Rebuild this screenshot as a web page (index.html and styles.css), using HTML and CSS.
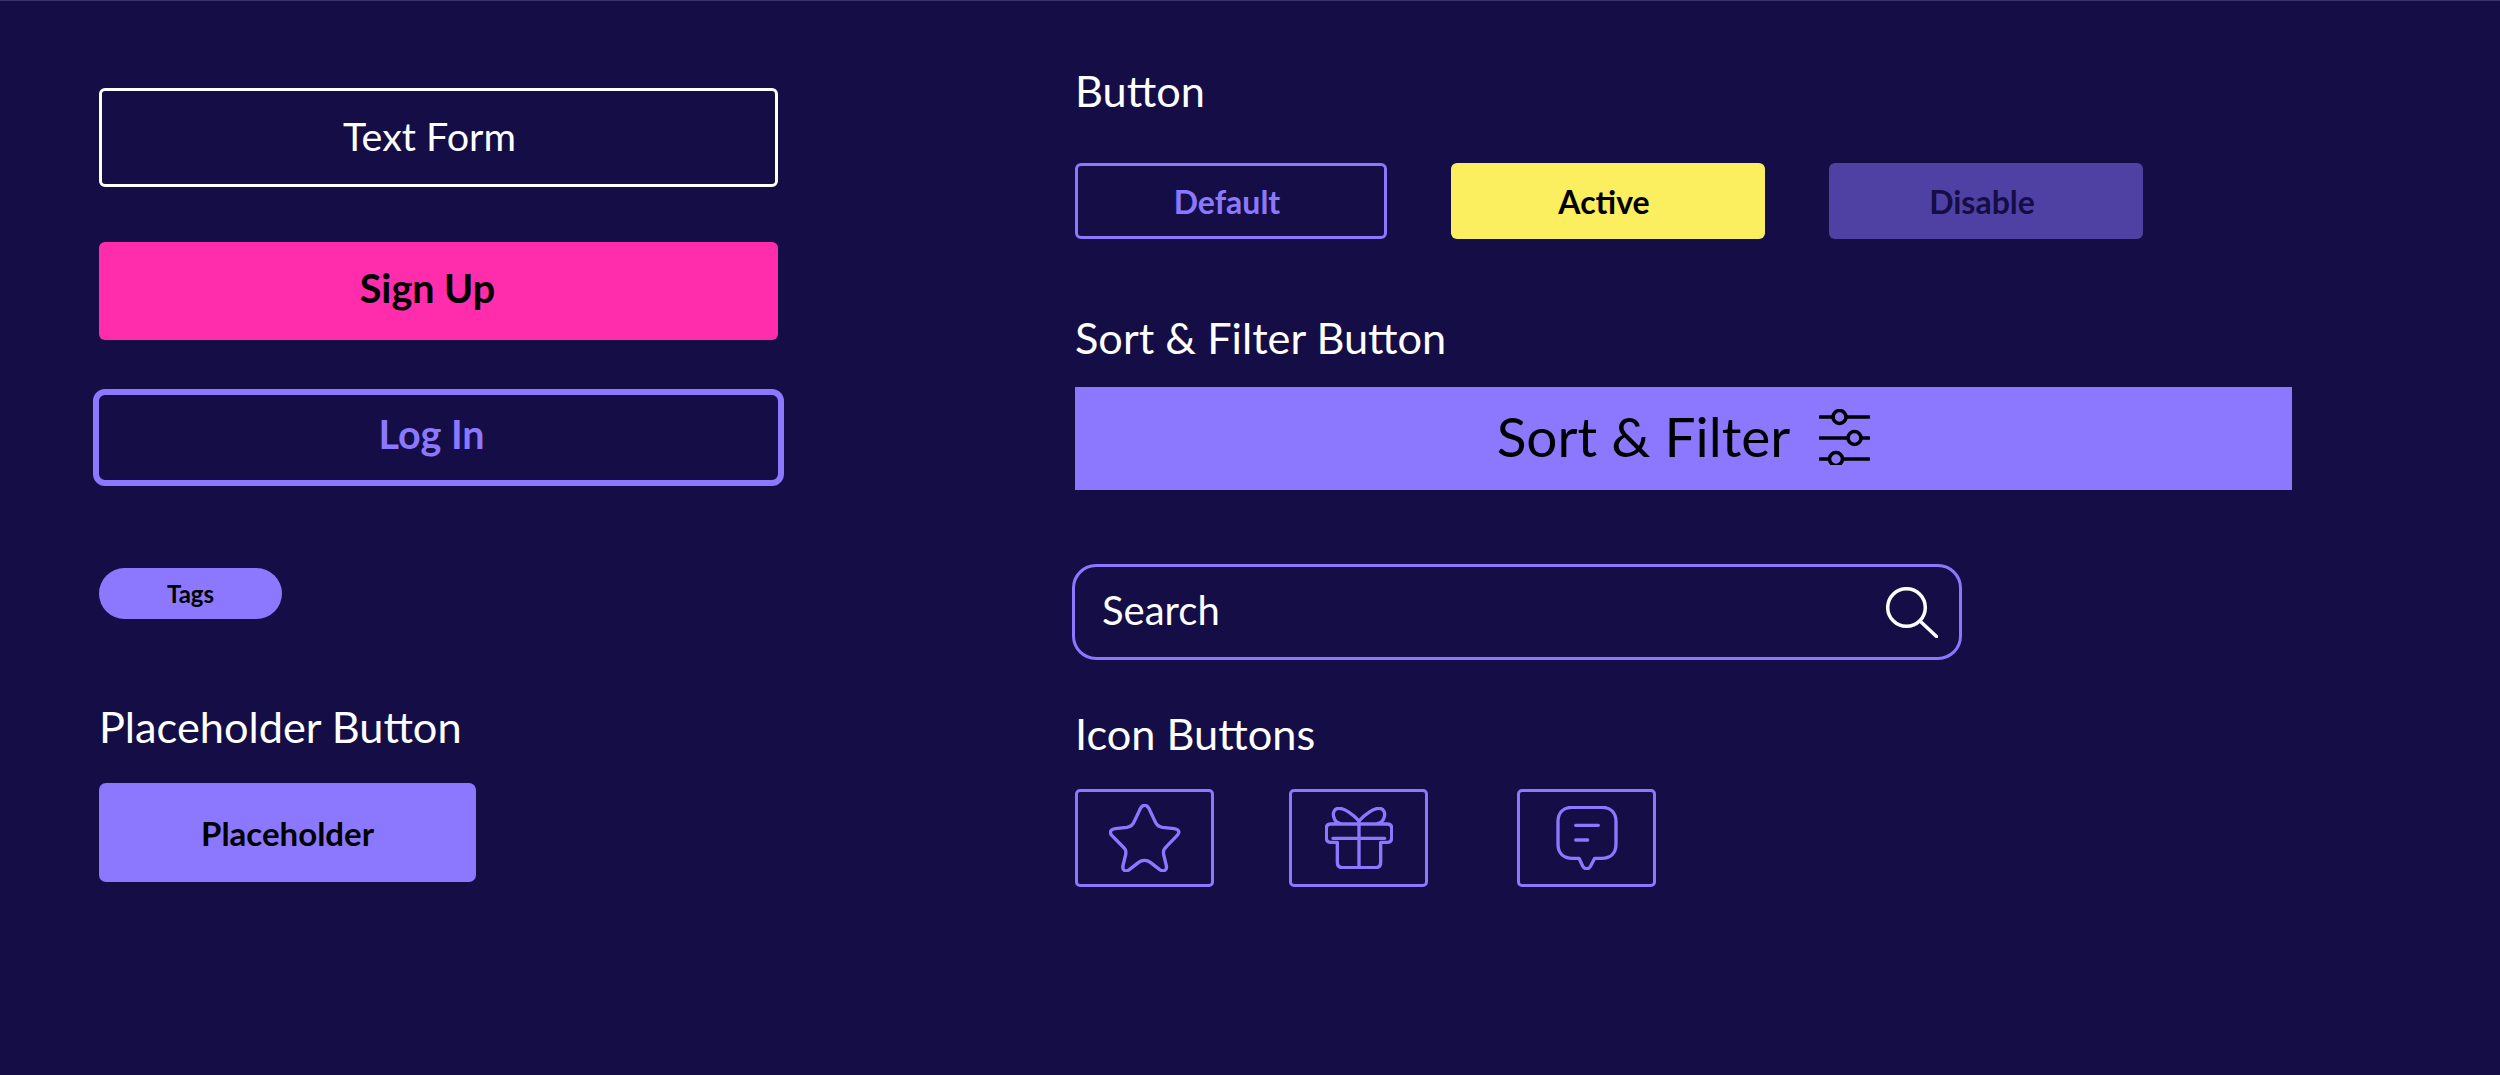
FILE: index.html
```html
<!DOCTYPE html>
<html lang="en">
<head>
<meta charset="utf-8">
<title>UI Buttons</title>
<link rel="stylesheet" href="styles.css">
</head>
<body>
<main class="page">
  <section class="left">
    <div class="btn-wide btn-form">Text Form</div>
    <div class="btn-wide btn-signup">Sign Up</div>
    <div class="btn-wide btn-login">Log In</div>
    <div class="tag">Tags</div>
    <h2 class="heading heading-placeholder">Placeholder Button</h2>
    <div class="btn-placeholder">Placeholder</div>
  </section>
  <section class="right">
    <h2 class="heading">Button</h2>
    <div class="state-row">
      <div class="state state-default">Default</div>
      <div class="state state-active">Active</div>
      <div class="state state-disable">Disable</div>
    </div>
    <h2 class="heading heading-sort">Sort &amp; Filter Button</h2>
    <div class="sort-bar">
      <span class="sort-label">Sort &amp; Filter</span>
      <svg class="sort-icon" width="51" height="56" viewBox="0 0 51 56" fill="none" stroke="#000" stroke-width="3.6" stroke-linecap="round">
        <path d="M1 8H14M27 8H50M1 29H29M42 29H50M1 50H10M24 50H50"/>
        <circle cx="20.500" cy="8" r="6.500"/><circle cx="35.500" cy="29" r="6.500"/><circle cx="17" cy="50" r="6.500"/>
      </svg>
    </div>
    <div class="search">
      <span class="search-label">Search</span>
      <svg class="search-icon" width="52" height="51" viewBox="0 0 52 51" fill="none" stroke="#fff" stroke-width="3.500" stroke-linecap="round">
        <circle cx="20.500" cy="20.500" r="18.800"/><path d="M34 34L50.500 49.500"/>
      </svg>
    </div>
    <h2 class="heading heading-icons">Icon Buttons</h2>
    <div class="icon-row">
      <div class="icon-btn">
        <svg width="72" height="68" viewBox="146 73 216 204" fill="none" stroke="#8c78ff" stroke-width="10">
          <path d="M253 77C245 77 240 85 236 95L222 125C218 137 212 141 200 143L165 147C150 149 146 158 155 168L185 198C195 207 198 212 196 225L188 258C185 272 195 278 207 270L235 248C245 240 260 240 270 248L298 270C310 278 321 272 318 258L310 225C308 212 311 207 321 198L350 168C360 158 356 149 341 147L306 143C294 141 288 137 284 125L270 95C266 85 261 77 253 77Z"/>
        </svg>
      </div>
      <div class="icon-btn">
        <svg width="68" height="62" viewBox="133 86 204 186" fill="none" stroke="#8c78ff" stroke-width="10" stroke-linecap="round">
          <path d="M168 192H150Q137 192 137 178V150Q137 137 150 137H320Q333 137 333 150V178Q333 192 320 192H302"/>
          <path d="M170 192V252Q170 268 186 268H285Q300 268 300 252V192"/>
          <path d="M157 180H312M235 130V266"/>
          <path d="M235 128C215 105 190 90 175 90C160 90 155 105 160 118C163 128 170 133 178 135"/>
          <path d="M235 128C255 105 280 90 295 90C310 90 315 105 310 118C307 128 300 133 292 135"/>
        </svg>
      </div>
      <div class="icon-btn icon-btn-chat">
        <svg width="62" height="64" viewBox="136 80 186 192" fill="none" stroke="#8c78ff" stroke-width="10" stroke-linecap="round" stroke-linejoin="round">
          <path d="M185 84H273C300 84 316 100 316 127V194C316 221 300 237 273 237H252L240 260C234 271 222 271 216 260L205 237H185C158 237 142 221 142 194V127C142 100 158 84 185 84Z"/>
          <path d="M195 138H263M195 182H231"/>
        </svg>
      </div>
    </div>
  </section>
</main>
</body>
</html>
```
FILE: styles.css
```css
* { box-sizing: border-box; }

html, body {
  margin: 0;
  height: 100%;
  overflow: hidden;
}

body {
  background: #150e46;
  color: #fff;
  font-family: "Lato", "Open Sans", sans-serif;
}

.page {
  display: flex;
  height: 1075px;
  padding-left: 99px;
  border-top: 1px solid #3a3468;
}

.left {
  width: 679px;
  padding-top: 87px;
  display: flex;
  flex-direction: column;
  align-items: flex-start;
}

.right {
  width: 1217px;
  margin-left: 297px;
  padding-top: 59px;
  display: flex;
  flex-direction: column;
  align-items: flex-start;
}

.heading {
  margin: 0;
  font-size: 43.3px;
  font-weight: 400;
  line-height: 60px;
}

.btn-wide {
  width: 679px;
  display: flex;
  align-items: center;
  justify-content: center;
  font-size: 39.5px;
}

.btn-form {
  height: 99px;
  padding: 0 18px 5px 0;
  border: 3.5px solid #fff;
  border-radius: 6px;
}

.btn-signup {
  height: 98px;
  margin-top: 55px;
  padding: 0 22px 8px 0;
  background: #ff2dab;
  border-radius: 6px;
  color: #000;
  font-weight: 700;
}

.btn-login {
  height: 85px;
  margin-top: 55px;
  padding: 0 14px 8px 0;
  outline: 6px solid #8c78ff;
  border-radius: 6px;
  color: #8c78ff;
  font-weight: 700;
}

.tag {
  width: 183px;
  height: 51px;
  margin-top: 88px;
  display: flex;
  align-items: center;
  justify-content: center;
  background: #8c78ff;
  border-radius: 26px;
  color: #000;
  font-size: 24px;
  font-weight: 700;
}

.heading-placeholder {
  margin-top: 77px;
}

.btn-placeholder {
  width: 377px;
  height: 99px;
  margin-top: 27px;
  display: flex;
  align-items: center;
  justify-content: center;
  background: #8c78ff;
  border-radius: 7px;
  color: #000;
  font-size: 33px;
  font-weight: 700;
}

.state-row {
  display: flex;
  gap: 64px;
  margin-top: 43px;
}

.state {
  width: 314px;
  height: 76px;
  display: flex;
  align-items: center;
  justify-content: center;
  padding-right: 8px;
  border-radius: 6px;
  font-size: 32px;
  font-weight: 700;
}

.state-default {
  width: 312px;
  border: 3.5px solid #8c78ff;
  color: #8c78ff;
}

.state-active {
  background: #fbee5f;
  color: #000;
}

.state-disable {
  background: #4f41a3;
  color: #150e46;
}

.heading-sort {
  margin-top: 68px;
}

.sort-bar {
  width: 1217px;
  height: 103px;
  margin-top: 20px;
  display: flex;
  align-items: center;
  justify-content: center;
  gap: 29px;
  background: #8c78ff;
  color: #000;
  font-size: 55px;
}

.sort-label {
  padding-bottom: 5px;
}

.sort-icon {
  margin-bottom: 3px;
}

.search {
  width: 890px;
  height: 96px;
  margin: 74px 0 0 -3px;
  display: flex;
  align-items: center;
  justify-content: space-between;
  padding: 0 21px 0 27px;
  border: 3.5px solid #8c78ff;
  border-radius: 24px;
  font-size: 40px;
}

.search-label {
  padding-bottom: 5px;
}

.heading-icons {
  margin-top: 43px;
}

.icon-row {
  display: flex;
  gap: 75px;
  margin-top: 26px;
}

.icon-btn {
  width: 139px;
  height: 98px;
  display: flex;
  align-items: center;
  justify-content: center;
  border: 3.5px solid #8c78ff;
  border-radius: 5px;
}

.icon-btn-chat {
  margin-left: 14px;
}
```
